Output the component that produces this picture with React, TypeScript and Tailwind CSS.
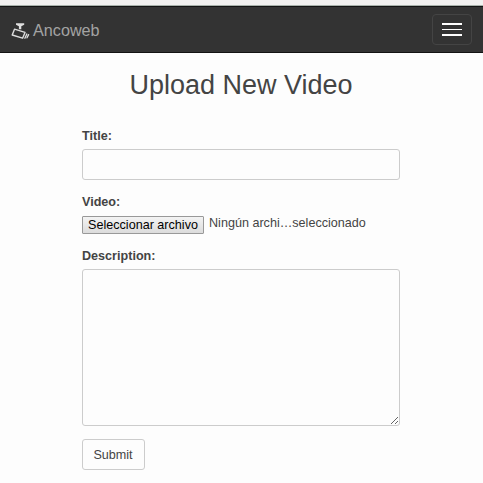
function CameraIcon() {
  return (
    <svg width="18" height="18" viewBox="0 0 18 18" fill="none" className="overflow-visible" aria-hidden="true">
      <path d="M5 2.3h8.2v1.4L10.3 5.2v3.1H7.9V5.2L5 3.7z" fill="#e0e0e0" />
      <path d="M3.5 8.2 14 11.4 11.6 17.2 1.2 14z" stroke="#ddd" strokeWidth="1.4" strokeLinejoin="round" />
      <path d="M15.8 13 13.9 17.2M17.6 13.6 16 16.8" stroke="#ddd" strokeWidth="1.3" strokeLinecap="round" />
    </svg>
  );
}

function Navbar() {
  return (
    <nav className="flex h-[47px] items-center justify-between border-y border-[#141414] bg-[#333] px-[11px]">
      <a className="flex items-center gap-1 text-[16.2px] leading-5 text-[#a3a3a3]">
        <CameraIcon />
        <span>Ancoweb</span>
      </a>
      <button type="button" aria-label="Menu" className="flex h-[31px] w-10 flex-col items-center rounded-[4px] border border-[#444] pt-2">
        <span className="h-0.5 w-5 bg-white" />
        <span className="mt-1 h-px w-5 bg-white" />
        <span className="mt-1 h-0.5 w-5 bg-white" />
      </button>
    </nav>
  );
}

export default function App() {
  return (
    <div className={'h-[483px] w-full overflow-hidden bg-[#fdfdfd] text-[12.6px] leading-[18px] text-[#444] font-["Liberation_Sans",Arial,sans-serif]'}>
      <div className="h-1.5 border-b border-[#a9b2ab] bg-[#f2f1f0]" />
      <Navbar />
      <h1 className="mt-[17px] pr-px text-center text-[27px] leading-[30px]">Upload New Video</h1>
      <form className="ml-[82px] mt-[27px] flex w-[318px] flex-col items-start" onSubmit={(e) => e.preventDefault()}>
        <label className="font-bold" htmlFor="title">Title:</label>
        <input id="title" className="mt-1 h-[31px] w-full rounded-[3px] border border-[#ccc] px-3 outline-none" />
        <label className="mt-[13px] font-bold">Video:</label>
        <div className="mt-[5px] flex h-[18px] items-start">
          <button type="button" className="h-[18px] w-[122px] whitespace-nowrap rounded-[1px] border border-[#999] bg-linear-to-b from-[#f4f4f4] to-[#dcdcdc] leading-4 text-black">
            Seleccionar archivo
          </button>
          <span className="-mt-[2px] ml-[5px]">Ningún archi…seleccionado</span>
        </div>
        <label className="mt-[13px] font-bold" htmlFor="description">Description:</label>
        <textarea id="description" className="mt-1 h-[157px] w-full resize rounded-[3px] border border-[#ccc] px-3 py-1.5 outline-none" />
        <button type="submit" className="mt-[13px] h-[31px] w-[63px] rounded-[3px] border border-[#ccc] pr-px">Submit</button>
      </form>
    </div>
  );
}
